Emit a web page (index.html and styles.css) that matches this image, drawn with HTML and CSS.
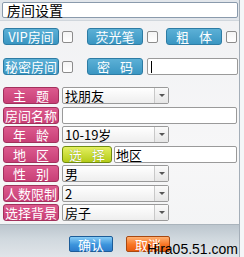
FILE: index.html
```html
<!DOCTYPE html>
<html lang="zh">
  <head>
    <meta charset="UTF-8" />
    <title>房间设置</title>
    <link rel="stylesheet" href="styles.css">
  </head>
  <body>
    <div class="dialog">
      <div class="title-bar">
        <div class="title">房间设置</div>
      </div>
      <div class="options">
        <div class="opt-row">
          <span class="tag blue">VIP房间</span>
          <span class="check"></span>
          <span class="tag blue">荧光笔</span>
          <span class="check"></span>
          <span class="tag blue wide bold-gap">粗体</span>
          <span class="check"></span>
        </div>
        <div class="opt-row second">
          <span class="tag blue">秘密房间</span>
          <span class="check"></span>
          <span class="tag blue wide">密码</span>
          <span class="field pass"><i class="caret"></i></span>
        </div>
      </div>
      <div class="form">
        <div class="form-row">
          <span class="tag pink wide">主题</span>
          <span class="select">找朋友<b class="arrow"></b></span>
        </div>
        <div class="form-row">
          <span class="tag pink">房间名称</span>
          <span class="field long"></span>
        </div>
        <div class="form-row">
          <span class="tag pink wide">年龄</span>
          <span class="select">10-19岁<b class="arrow"></b></span>
        </div>
        <div class="form-row">
          <span class="tag pink wide">地区</span>
          <span class="tag green wide">选择</span>
          <span class="field area">地区</span>
        </div>
        <div class="form-row">
          <span class="tag pink wide">性别</span>
          <span class="select">男<b class="arrow"></b></span>
        </div>
        <div class="form-row">
          <span class="tag pink">人数限制</span>
          <span class="select">2<b class="arrow"></b></span>
        </div>
        <div class="form-row">
          <span class="tag pink">选择背景</span>
          <span class="select">房子<b class="arrow"></b></span>
        </div>
      </div>
      <div class="footer">
        <span class="btn ok">确认</span>
        <span class="btn cancel">取消</span>
      </div>
      <div class="mark">Hira05.51.com</div>
    </div>
  </body>
</html>
```

FILE: styles.css
```css
* {
  margin: 0;
  padding: 0;
  box-sizing: border-box;
}
body {
  width: 244px;
  height: 257px;
  background: #f4f6f8;
  font-family: "Noto Sans CJK SC", sans-serif;
  overflow: hidden;
}
.dialog {
  position: relative;
  width: 240px;
  height: 257px;
  border-right: 1px solid #a4aeb8;
  background: linear-gradient(#f0f1f3, #f7f7f8 60%, #f2f3f4);
}
.title-bar {
  height: 21px;
  padding: 2px 1px 0 2px;
  background: #e2e6eb;
  border-bottom: 1px solid #d0d6dc;
}
.title {
  height: 16px;
  border: 1px solid #8a9aac;
  border-radius: 2px;
  background: #fff;
  font-size: 14px;
  line-height: 14px;
  padding-left: 4px;
  color: #000;
}
.options {
  padding: 7px 0 0 3px;
}
.opt-row {
  display: flex;
  align-items: center;
  height: 17px;
}
.opt-row.second {
  margin-top: 13px;
}
.tag {
  display: flex;
  align-items: center;
  justify-content: center;
  width: 56px;
  height: 17px;
  border-radius: 3px;
  color: #fff;
  font-size: 13px;
  line-height: 17px;
  white-space: nowrap;
}
.tag.wide {
  letter-spacing: 10px;
  text-indent: 10px;
}
.blue {
  background: linear-gradient(#5cb0d6, #3a96c2);
  border: 1px solid #2d7ca4;
}
.pink {
  background: linear-gradient(#dc5a8e, #c83f76);
  border: 1px solid #a2305c;
}
.green {
  width: 50px;
  background: linear-gradient(#e4f060, #b4cc18);
  border: 1px solid #708c10;
  text-shadow: 0 0 1px #6a8010;
}
.check {
  width: 11px;
  height: 12px;
  border: 1px solid #8c8c8c;
  border-radius: 2px;
  background: linear-gradient(#f4f4f4, #fff);
}
.opt-row .check + .tag {
  margin-left: 14px;
}
.opt-row .check + .bold-gap {
  margin-left: 8px;
}
.opt-row .tag + .check {
  margin-left: 4px;
}
.opt-row .tag:first-child + .check {
  margin-left: 3px;
}
.field {
  display: flex;
  align-items: center;
  height: 17px;
  border: 1px solid #9a9a9a;
  border-radius: 2px;
  background: #fff;
  font-size: 13px;
  color: #000;
}
.pass {
  width: 91px;
  margin-left: 4px;
  padding-left: 3px;
}
.caret {
  width: 1px;
  height: 12px;
  background: #000;
}
.form {
  display: flex;
  flex-direction: column;
  gap: 2.5px;
  padding: 12px 0 0 3px;
}
.form-row {
  display: flex;
  align-items: center;
  gap: 3px;
  height: 17px;
}
.long {
  width: 175px;
}
.area {
  width: 123px;
  margin-left: -1px;
  padding-left: 1px;
}
.select {
  position: relative;
  display: flex;
  align-items: center;
  width: 107px;
  height: 17px;
  padding-left: 2px;
  border: 1px solid #9a9a9a;
  border-radius: 2px;
  background: linear-gradient(#ffffff, #eeeeee);
  font-size: 13px;
  color: #000;
}
.arrow {
  position: absolute;
  right: 0;
  top: 0;
  width: 14px;
  height: 15px;
  border-left: 1px solid #c8c8c8;
  background: linear-gradient(#fafafa, #e6e6e6);
}
.arrow::after {
  content: "";
  position: absolute;
  left: 4px;
  top: 6px;
  border-left: 3px solid transparent;
  border-right: 3px solid transparent;
  border-top: 3px solid #555;
}
.footer {
  display: flex;
  justify-content: center;
  gap: 13px;
  height: 35px;
  margin-top: 3px;
  padding: 11px 0 0 0;
  background: linear-gradient(#bcc6ce, #d0d8de 40%, #e2e6ea);
  border-top: 1px solid #aab4bc;
}
.btn {
  display: flex;
  align-items: center;
  justify-content: center;
  width: 44px;
  height: 16px;
  border-radius: 2px;
  color: #fff;
  font-size: 13px;
}
.ok {
  background: linear-gradient(#86ccf6, #3c94dc 55%, #2c7ccc);
  border: 1px solid #1c5c98;
}
.cancel {
  background: linear-gradient(#ffb070, #f87424 55%, #e85c10);
  border: 1px solid #a84810;
}
.mark {
  position: absolute;
  right: 1px;
  bottom: 0;
  font-family: "Liberation Sans", Arial, sans-serif;
  font-size: 14px;
  line-height: 15px;
  color: #000;
}
```
